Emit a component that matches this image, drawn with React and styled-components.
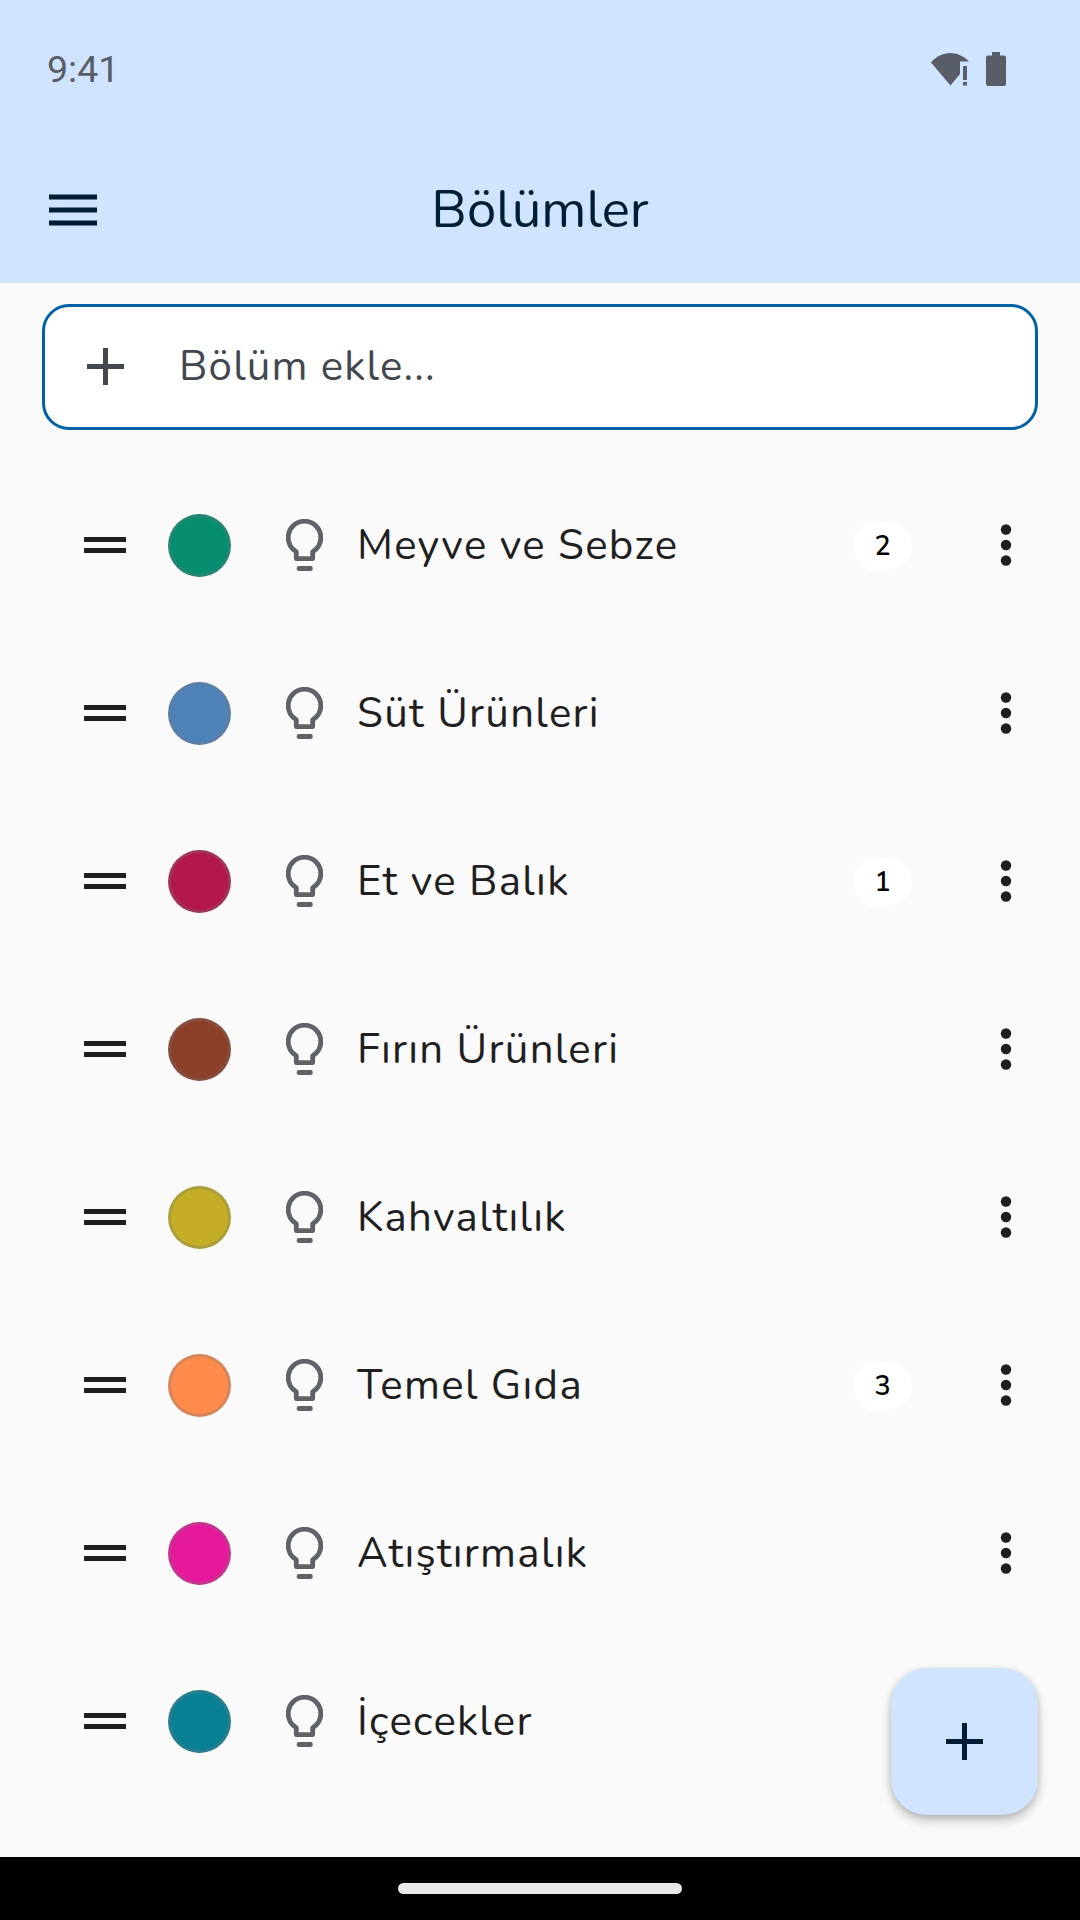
import styled, { createGlobalStyle } from 'styled-components';

const sections = [
  { id: 1, name: 'Meyve ve Sebze', color: '#068c6f', count: 2 },
  { id: 2, name: 'Süt Ürünleri', color: '#4f82b8' },
  { id: 3, name: 'Et ve Balık', color: '#b2174e', count: 1 },
  { id: 4, name: 'Fırın Ürünleri', color: '#8c4029' },
  { id: 5, name: 'Kahvaltılık', color: '#c4ae25' },
  { id: 6, name: 'Temel Gıda', color: '#ff8c4d', count: 3 },
  { id: 7, name: 'Atıştırmalık', color: '#e6199a' },
  { id: 8, name: 'İçecekler', color: '#0a8095' },
];

const GlobalStyle = createGlobalStyle`
  html, body {
    margin: 0;
    padding: 0;
    background: #fafafa;
  }
`;

const Screen = styled.div`
  position: relative;
  width: 1080px;
  height: 1920px;
  display: flex;
  flex-direction: column;
  overflow: hidden;
  background: #fafafa;
  font-family: "Nunito", "Lato", "Noto Sans", sans-serif;
`;

const Header = styled.header`
  height: 283px;
  flex: none;
  display: flex;
  flex-direction: column;
  background: #d1e4ff;
`;

const StatusBar = styled.div`
  height: 140px;
  box-sizing: border-box;
  padding: 0 74px 2px 47px;
  display: flex;
  align-items: center;
  justify-content: space-between;
  color: #585d68;
`;

const Clock = styled.span`
  font-family: "Roboto", sans-serif;
  font-size: 37.5px;
`;

const StatusIcons = styled.div`
  display: flex;
  align-items: center;
  gap: 17px;
`;

const TitleBar = styled.div`
  flex: 1;
  padding: 0 49px;
  display: grid;
  grid-template-columns: 48px 1fr 48px;
  align-items: center;
  color: #001d36;
  margin-top: -4px;
`;

const Title = styled.h1`
  margin: 0;
  text-align: center;
  font-size: 52.7px;
  font-weight: 400;
`;

const Content = styled.main`
  flex: 1;
  padding-top: 21px;
`;

const AddInput = styled.div`
  width: 996px;
  height: 126px;
  box-sizing: border-box;
  margin-left: 42px;
  padding: 0 0 2px 42px;
  display: flex;
  align-items: center;
  gap: 55px;
  border: 3px solid #0061a4;
  border-radius: 27px;
  background: #fff;
  color: #43474e;
`;

const Placeholder = styled.span`
  font-size: 42px;
  letter-spacing: 1.2px;
`;

const List = styled.ul`
  list-style: none;
  margin: 31px 0 0;
  padding: 0;
`;

const Row = styled.li`
  height: 168px;
  padding-left: 84px;
  display: flex;
  align-items: center;
  color: #1f1f1f;
`;

const Swatch = styled.span`
  width: 63px;
  height: 63px;
  box-sizing: border-box;
  flex: none;
  margin: 0 55px 0 42px;
  border-radius: 50%;
  border: 3px solid rgba(120, 120, 120, 0.3);
  background: ${(p) => p.$color};
`;

const Name = styled.span`
  flex: 1;
  margin-left: 34px;
  font-size: 42px;
  letter-spacing: 1.3px;
`;

const Badge = styled.span`
  width: 59px;
  height: 49px;
  box-sizing: border-box;
  padding-top: 3px;
  margin-right: 84px;
  display: flex;
  align-items: center;
  justify-content: center;
  border-radius: 25px;
  background: #fff;
  color: #000;
  font-size: 27px;
  font-weight: 600;
`;

const MenuButton = styled.span`
  width: 20px;
  margin-right: 64px;
  display: flex;
  justify-content: center;
`;

const Fab = styled.button`
  position: absolute;
  left: 891px;
  top: 1668px;
  width: 147px;
  height: 147px;
  padding: 0;
  display: flex;
  align-items: center;
  justify-content: center;
  border: none;
  border-radius: 36px;
  background: #d1e4ff;
  color: #001d36;
  box-shadow: 0 6px 12px rgba(0, 0, 0, 0.2), 0 2px 6px rgba(0, 0, 0, 0.14);
`;

const NavBar = styled.div`
  height: 63px;
  flex: none;
  display: flex;
  align-items: center;
  justify-content: center;
  background: #000;
`;

const HomeHandle = styled.span`
  width: 284px;
  height: 11px;
  border-radius: 5.5px;
  background: #e8e8e8;
`;

function WifiIcon() {
  return (
    <svg width="38" height="33" viewBox="0 0 38 33" fill="currentColor">
      <path d="M0 9.500C5 3.500 12 0 19 0c7 0 14 3 19 8.500H29V21l-9.500 11.500z" />
      <rect x="32" y="13" width="4" height="14" />
      <rect x="32" y="29" width="4" height="3.500" />
    </svg>
  );
}

function BatteryIcon() {
  return (
    <svg width="20" height="34" viewBox="0 0 20 34" fill="currentColor">
      <path d="M6 0h8v3.500h4a2 2 0 0 1 2 2V32a2 2 0 0 1-2 2H2a2 2 0 0 1-2-2V5.500a2 2 0 0 1 2-2h4z" />
    </svg>
  );
}

function MenuIcon() {
  return (
    <svg width="48" height="32" viewBox="0 0 48 32" fill="currentColor">
      <rect y="0.500" width="48" height="5" />
      <rect y="13.500" width="48" height="5" />
      <rect y="26.500" width="48" height="5" />
    </svg>
  );
}

function PlusIcon() {
  return (
    <svg width="37" height="37" viewBox="0 0 37 37" fill="currentColor">
      <rect x="16" y="0" width="5" height="37" />
      <rect x="0" y="16" width="37" height="5" />
    </svg>
  );
}

function DragIcon() {
  return (
    <svg width="42" height="16" viewBox="0 0 42 16" fill="#1f1f1f">
      <rect y="0" width="42" height="5" />
      <rect y="11" width="42" height="5" />
    </svg>
  );
}

function BulbIcon() {
  return (
    <svg width="37" height="52" viewBox="0 0 37 52" fill="none">
      <path
        d="M10.300 39.700V32.800C5.500 29.800 2.200 24.500 2.200 18.500a16.300 16.300 0 0 1 32.600 0c0 6-3.300 11.300-8.100 14.300v6.900z"
        stroke="#5f6368"
        strokeWidth="4.800"
        strokeLinejoin="round"
      />
      <rect x="10.700" y="47" width="16" height="5" rx="2" fill="#5f6368" />
    </svg>
  );
}

function DotsIcon() {
  return (
    <svg width="12" height="42" viewBox="0 0 12 42" fill="#1f1f1f">
      <circle cx="6" cy="5.500" r="5.200" />
      <circle cx="6" cy="21" r="5.200" />
      <circle cx="6" cy="36.500" r="5.200" />
    </svg>
  );
}

function SectionRow({ section }) {
  return (
    <Row>
      <DragIcon />
      <Swatch $color={section.color} />
      <BulbIcon />
      <Name>{section.name}</Name>
      {section.count && <Badge>{section.count}</Badge>}
      <MenuButton>
        <DotsIcon />
      </MenuButton>
    </Row>
  );
}

export default function App() {
  return (
    <Screen>
      <GlobalStyle />
      <Header>
        <StatusBar>
          <Clock>9:41</Clock>
          <StatusIcons>
            <WifiIcon />
            <BatteryIcon />
          </StatusIcons>
        </StatusBar>
        <TitleBar>
          <MenuIcon />
          <Title>Bölümler</Title>
        </TitleBar>
      </Header>
      <Content>
        <AddInput>
          <PlusIcon />
          <Placeholder>Bölüm ekle...</Placeholder>
        </AddInput>
        <List>
          {sections.map((section) => (
            <SectionRow key={section.id} section={section} />
          ))}
        </List>
      </Content>
      <Fab>
        <PlusIcon />
      </Fab>
      <NavBar>
        <HomeHandle />
      </NavBar>
    </Screen>
  );
}
